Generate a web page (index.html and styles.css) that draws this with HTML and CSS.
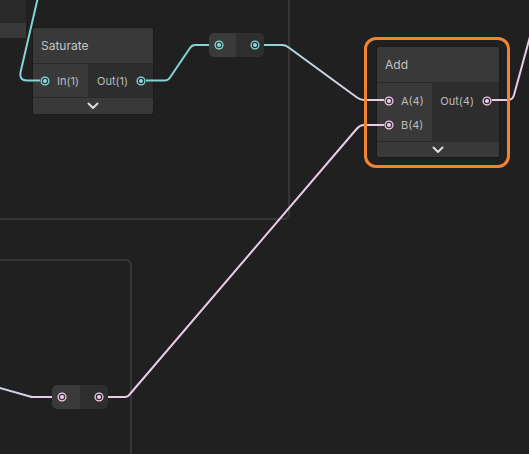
FILE: index.html
```html
<!DOCTYPE html>
<html>
<head>
<meta charset="utf-8">
<link rel="stylesheet" href="styles.css">
</head>
<body>
<div class="canvas">
  <svg class="groups" width="529" height="454" viewBox="0 0 529 454">
    <path d="M289,-2 L289,213 Q289,219 283,219 L-2,219"/>
    <path d="M-2,260 L125,260 Q131,260 131,266 L131,456"/>
  </svg>

  <div class="stub-node">
    <div class="stub-ports"></div>
    <div class="stub-collapse"></div>
  </div>

  <div class="node node-saturate">
    <div class="title">Saturate</div>
    <div class="ports">
      <div class="inputs">
        <div class="port in cyan"><svg class="dot" viewBox="0 0 10 10"><circle cx="5" cy="5" r="3.9" class="ring"/><circle cx="5" cy="5" r="2" class="fill"/></svg><span>In(1)</span></div>
      </div>
      <div class="outputs">
        <div class="port out cyan"><span>Out(1)</span><svg class="dot" viewBox="0 0 10 10"><circle cx="5" cy="5" r="3.9" class="ring"/><circle cx="5" cy="5" r="2" class="fill"/></svg></div>
      </div>
    </div>
    <div class="collapse"><svg class="chev" viewBox="0 0 12 8"><polyline points="1.5,1.5 6,6 10.5,1.5"/></svg></div>
  </div>

  <div class="node node-add">
    <div class="title">Add</div>
    <div class="ports">
      <div class="inputs">
        <div class="port in pink"><svg class="dot" viewBox="0 0 10 10"><circle cx="5" cy="5" r="3.9" class="ring"/><circle cx="5" cy="5" r="2" class="fill"/></svg><span>A(4)</span></div>
        <div class="port in pink"><svg class="dot" viewBox="0 0 10 10"><circle cx="5" cy="5" r="3.9" class="ring"/><circle cx="5" cy="5" r="2" class="fill"/></svg><span>B(4)</span></div>
      </div>
      <div class="outputs">
        <div class="port out pink"><span>Out(4)</span><svg class="dot" viewBox="0 0 10 10"><circle cx="5" cy="5" r="3.9" class="ring"/><circle cx="5" cy="5" r="2" class="fill"/></svg></div>
      </div>
    </div>
    <div class="collapse"><svg class="chev" viewBox="0 0 12 8"><polyline points="1.5,1.5 6,6 10.5,1.5"/></svg></div>
  </div>

  <div class="reroute reroute-a cyan">
    <div class="half left"><svg class="dot" viewBox="0 0 10 10"><circle cx="5" cy="5" r="3.9" class="ring"/><circle cx="5" cy="5" r="2" class="fill"/></svg></div>
    <div class="half right"><svg class="dot" viewBox="0 0 10 10"><circle cx="5" cy="5" r="3.9" class="ring"/><circle cx="5" cy="5" r="2" class="fill"/></svg></div>
  </div>

  <div class="reroute reroute-b pink">
    <div class="half left"><svg class="dot" viewBox="0 0 10 10"><circle cx="5" cy="5" r="3.9" class="ring"/><circle cx="5" cy="5" r="2" class="fill"/></svg></div>
    <div class="half right"><svg class="dot" viewBox="0 0 10 10"><circle cx="5" cy="5" r="3.9" class="ring"/><circle cx="5" cy="5" r="2" class="fill"/></svg></div>
  </div>

  <svg class="wires" width="529" height="454" viewBox="0 0 529 454">
    <defs>
      <linearGradient id="g3" gradientUnits="userSpaceOnUse" x1="264" y1="0" x2="385" y2="0">
        <stop offset="0" stop-color="#7fd5d8"/>
        <stop offset="0.25" stop-color="#b9d6e4"/>
        <stop offset="1" stop-color="#eccbe9"/>
      </linearGradient>
      <linearGradient id="g4" gradientUnits="userSpaceOnUse" x1="0" y1="0" x2="52" y2="0">
        <stop offset="0" stop-color="#c9d3ea"/>
        <stop offset="1" stop-color="#eccbe9"/>
      </linearGradient>
    </defs>
    <path class="w cy" d="M37.8,-2 L20.6,72 Q19,80.5 27,80.5 L40,80.5"/>
    <path class="w cy" d="M146,80.5 L165,80.5 Q168,80.5 170,77.5 L190,48 Q192,45 195,45 L209,45"/>
    <path class="w" stroke="url(#g3)" d="M264,45 L282,45 Q285.5,45 288,47 L357,97.5 Q360.5,100 364,100 L384,100"/>
    <path class="w" stroke="url(#g4)" d="M-2,387.5 L30,396.5 Q31.5,397 33,397 L52,397"/>
    <path class="w pk" d="M108,397 L125,397 Q128,397 130,394 L357,128.5 Q360,125 364,125 L384,125"/>
    <path class="w pk" d="M492,100 L508,100 Q512.5,100 514,95 L531,33"/>
  </svg>

  <div class="selection"></div>
</div>
</body>
</html>
```

FILE: styles.css
```css
html, body {
  margin: 0;
  padding: 0;
  background: #202020;
}
body {
  width: 529px;
  height: 454px;
  overflow: hidden;
  font-family: Inter, "Noto Sans", "DejaVu Sans", sans-serif;
}
.canvas {
  position: relative;
  width: 529px;
  height: 454px;
  overflow: hidden;
  background: #202020;
}
.groups, .wires {
  position: absolute;
  left: 0;
  top: 0;
  pointer-events: none;
}
.groups path {
  fill: none;
  stroke: #363636;
  stroke-width: 2;
}
.wires .w {
  fill: none;
  stroke-width: 2;
  stroke-linejoin: round;
  stroke-linecap: butt;
}
.wires .cy { stroke: #7fd5d8; }
.wires .pk { stroke: #eccbe9; }

.stub-node {
  position: absolute;
  left: 0;
  top: 0;
  width: 26px;
  display: flex;
  flex-direction: column;
}
.stub-ports { height: 23px; background: #2a2a2a; }
.stub-collapse { height: 15px; background: #393939; }

.node {
  position: absolute;
  display: flex;
  flex-direction: column;
  background: #2d2d2d;
  box-shadow: 0 0 0 1px #1b1b1b;
  border-radius: 2px;
  overflow: hidden;
}
.node-saturate { left: 33px; top: 28px; width: 120px; }
.node-add { left: 377px; top: 47px; width: 122px; }

.title {
  height: 36px;
  display: flex;
  align-items: center;
  padding-left: 8px;
  background: #393939;
  color: #c4c4c4;
  font-size: 12px;
  border-bottom: 1px solid #2a2a2a;
  box-sizing: border-box;
}
.ports {
  display: flex;
}
.inputs {
  width: 55px;
  background: #393939;
  padding: 5px 0 4px;
  display: flex;
  flex-direction: column;
}
.node-add .inputs { padding: 6px 0 4px; }
.outputs {
  flex: 1;
  background: #2d2d2d;
  padding: 5px 0 4px;
  display: flex;
  flex-direction: column;
}
.node-add .outputs { padding: 6px 0 4px; }
.port {
  height: 24px;
  display: flex;
  align-items: center;
  font-size: 11px;
  color: #bcbcbc;
}
.port.in { padding-left: 7px; gap: 7px; }
.port.out { justify-content: flex-end; padding-right: 7px; gap: 8px; }

.dot { width: 10px; height: 10px; flex: none; display: block; }
.dot .ring { fill: none; stroke: currentColor; stroke-width: 1.3; }
.dot .fill { fill: currentColor; }
.cyan .dot { color: #84dcdf; }
.pink .dot { color: #f2cbef; }

.collapse {
  height: 17px;
  background: #393939;
  display: flex;
  align-items: center;
  justify-content: center;
  border-top: 1px solid #2a2a2a;
  box-sizing: border-box;
}
.node-add .collapse { height: 16px; }
.chev { width: 12px; height: 8px; display: block; }
.chev polyline { fill: none; stroke: #dcdcdc; stroke-width: 2; stroke-linecap: round; stroke-linejoin: round; }

.reroute {
  position: absolute;
  height: 24px;
  display: flex;
  border-radius: 5px;
  overflow: hidden;
}
.reroute-a { left: 209px; top: 33px; width: 55px; }
.reroute-b { left: 52px; top: 385px; width: 56px; }
.reroute .half {
  display: flex;
  align-items: center;
}
.reroute .left {
  width: 27px;
  background: #3a3a3a;
  padding-left: 5px;
  box-sizing: border-box;
}
.reroute-b .left { width: 28px; }
.reroute .right {
  flex: 1;
  background: #2e2e2e;
  justify-content: flex-end;
  padding-right: 4px;
}

.selection {
  position: absolute;
  left: 364px;
  top: 37px;
  width: 146px;
  height: 131px;
  box-sizing: border-box;
  border: 3px solid #ef8532;
  border-radius: 12px;
  pointer-events: none;
}
```
